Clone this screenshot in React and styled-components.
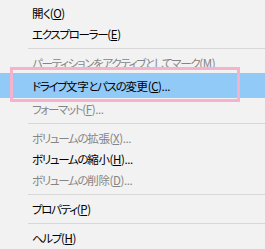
import React from 'react';
import styled, { createGlobalStyle } from 'styled-components';

const GlobalStyle = createGlobalStyle`
  html, body {
    margin: 0;
    padding: 0;
    background: #f2f2f2;
  }
`;

const Menu = styled.div`
  position: relative;
  width: 265px;
  height: 249px;
  overflow: hidden;
  box-sizing: border-box;
  padding-top: 2px;
  background: #f2f2f2;
  display: flex;
  flex-direction: column;
  font-family: "Noto Sans CJK JP", "Noto Sans", sans-serif;
  font-size: 11.5px;
  letter-spacing: -0.4px;
  font-feature-settings: "palt";
`;

const Item = styled.div`
  display: flex;
  align-items: center;
  height: ${p => (p.$active ? 25 : 21)}px;
  flex-shrink: 0;
  padding-left: 32px;
  color: ${p => (p.$disabled ? '#858585' : '#000')};
  background: ${p => (p.$active ? '#91c9f7' : 'transparent')};
  white-space: nowrap;
`;

// kana in the Windows UI font are much narrower than in Noto
const Kana = styled.span`
  letter-spacing: -1.3px;
`;

const Key = styled.span`
  text-decoration: underline;
  text-underline-offset: 1px;
`;

const Separator = styled.div`
  height: 8px;
  flex-shrink: 0;
  display: flex;
  align-items: center;
  padding-left: 28px;

  &::after {
    content: '';
    flex: 1;
    height: 1px;
    background: #d7d7d7;
  }
`;

const Marker = styled.div`
  position: absolute;
  left: 10px;
  top: 67px;
  width: 230px;
  height: 35px;
  box-sizing: border-box;
  border: 3px solid #f5b2cc;
  pointer-events: none;
`;

const items = [
  { label: '開く', key: 'O' },
  { label: 'エクスプローラー', key: 'E' },
  'sep',
  { label: 'パーティションをアクティブとしてマーク', key: 'M', disabled: true },
  { label: 'ドライブ文字とパスの変更', key: 'C', more: true, active: true },
  { label: 'フォーマット', key: 'F', more: true, disabled: true },
  'sep',
  { label: 'ボリュームの拡張', key: 'X', more: true, disabled: true },
  { label: 'ボリュームの縮小', key: 'H', more: true },
  { label: 'ボリュームの削除', key: 'D', more: true, disabled: true },
  'sep',
  { label: 'プロパティ', key: 'P' },
  'sep',
  { label: 'ヘルプ', key: 'H' },
];

const renderLabel = label =>
  label
    .split(/([\u3040-\u30ff]+)/)
    .filter(Boolean)
    .map((part, i) =>
      /^[\u3040-\u30ff]+$/.test(part) ? <Kana key={i}>{part}</Kana> : part
    );

const App = () => {
  return (
    <>
      <GlobalStyle />
      <Menu>
        {items.map((item, i) =>
          item === 'sep' ? (
            <Separator key={i} />
          ) : (
            <Item key={i} $disabled={item.disabled} $active={item.active}>
              {renderLabel(item.label)}(<Key>{item.key}</Key>){item.more ? '...' : ''}
            </Item>
          )
        )}
        <Marker />
      </Menu>
    </>
  );
};

export default App;
